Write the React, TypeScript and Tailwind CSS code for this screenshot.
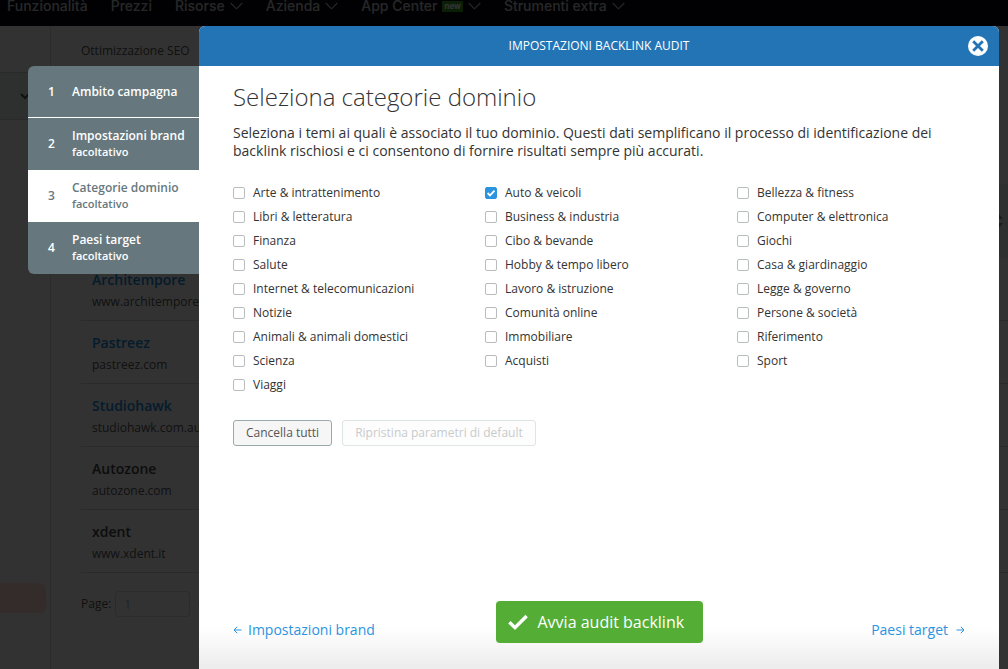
import { useState } from 'react';
import clsx from 'clsx';

const menuItems = [
  { label: 'Funzionalità' },
  { label: 'Prezzi' },
  { label: 'Risorse', hasMenu: true },
  { label: 'Azienda', hasMenu: true },
  { label: 'App Center', hasMenu: true, isNew: true },
  { label: 'Strumenti extra', hasMenu: true },
];

const projects = [
  { name: 'Architempore', domain: 'www.architempore.com', linked: true },
  { name: 'Pastreez', domain: 'pastreez.com', linked: true },
  { name: 'Studiohawk', domain: 'studiohawk.com.au', linked: true },
  { name: 'Autozone', domain: 'autozone.com', linked: false },
  { name: 'xdent', domain: 'www.xdent.it', linked: false },
];

const steps = [
  { title: 'Ambito campagna', optional: false },
  { title: 'Impostazioni brand', optional: true },
  { title: 'Categorie dominio', optional: true },
  { title: 'Paesi target', optional: true },
];

const categoryColumns = [
  [
    'Arte & intrattenimento',
    'Libri & letteratura',
    'Finanza',
    'Salute',
    'Internet & telecomunicazioni',
    'Notizie',
    'Animali & animali domestici',
    'Scienza',
    'Viaggi',
  ],
  [
    'Auto & veicoli',
    'Business & industria',
    'Cibo & bevande',
    'Hobby & tempo libero',
    'Lavoro & istruzione',
    'Comunità online',
    'Immobiliare',
    'Acquisti',
  ],
  [
    'Bellezza & fitness',
    'Computer & elettronica',
    'Giochi',
    'Casa & giardinaggio',
    'Legge & governo',
    'Persone & società',
    'Riferimento',
    'Sport',
  ],
];

const Chevron = () => (
  <svg viewBox="0 0 13 8" className="h-2 w-[13px]" fill="none" stroke="currentColor" strokeWidth="1.1">
    <path d="M0.7 1 6.5 6.8 12.3 1" />
  </svg>
);

const TopBar = () => (
  <header className="flex h-[26px] items-center gap-[23px] bg-[#05080f] pb-[14px] pl-[7px] font-['Inter'] text-sm leading-3 font-medium text-[#c4c4c4]">
    {menuItems.map((item) => (
      <a key={item.label} href="#" className="flex items-center gap-[5px] whitespace-nowrap">
        {item.label}
        {item.isNew && (
          <span className="bg-[#3b9d22] px-[2px] text-[8px] leading-[11px] font-bold text-white">new</span>
        )}
        {item.hasMenu && <Chevron />}
      </a>
    ))}
  </header>
);

const ProjectsPage = () => (
  <div className="flex flex-1">
    <aside className="w-[51px] shrink-0 border-r border-[#d5d5d5]">
      <div className="mt-[46px] flex h-12 items-center border-y border-[#d0d0d0] bg-[#e4e9ec] pl-5 text-[#555]">
        <svg viewBox="0 0 10 7" className="h-[7px] w-[10px]" fill="none" stroke="currentColor" strokeWidth="2">
          <path d="M1 1 5 5 9 1" />
        </svg>
      </div>
      <div className="mt-[463px] mr-1 h-[30px] rounded-r-md bg-[#ffdcd7]" />
    </aside>
    <main className="flex-1 pl-[30px] text-[#555]">
      <p className="pt-4 text-xs leading-[18px]">Ottimizzazione SEO &nbsp; ›</p>
      <div className="mt-[124px] flex h-[74px] items-center justify-end bg-[#e4e9ec] pr-[5px] text-[#888]">
        <svg viewBox="0 0 8 14" className="h-[14px] w-2" fill="currentColor">
          <path d="M4 0 8 5H0zM4 14 0 9h8z" />
        </svg>
      </div>
      <ul>
        {projects.map((project) => (
          <li key={project.name} className="h-[63px] border-b border-[#cfcfcf] pt-[11px] pl-[11px]">
            <a
              href="#"
              className={clsx(
                'block text-sm leading-[22px] font-semibold',
                project.linked ? 'text-[#1689d8]' : 'text-[#444]',
              )}
            >
              {project.name}
            </a>
            <span className="block text-xs leading-[22px]">{project.domain}</span>
          </li>
        ))}
      </ul>
      <div className="mt-[18px] flex items-center text-xs">
        <label htmlFor="page" className="mr-1">
          Page:
        </label>
        <input
          id="page"
          defaultValue="1"
          className="h-[26px] w-[75px] rounded border border-[#d5d5d5] px-2 text-[#aaa]"
        />
        <span className="ml-2">of 1</span>
      </div>
    </main>
  </div>
);

const StepNav = ({ current }: { current: number }) => (
  <nav className="mt-10 w-[171px] shrink-0 self-start overflow-hidden rounded-l-md bg-[#66787e]">
    {steps.map((step, index) => (
      <a
        key={step.title}
        href="#"
        className={clsx(
          'flex h-[52px] items-center pl-5 text-xs leading-4 font-semibold',
          index === 0 && 'border-b border-white',
          index === current ? 'bg-white text-[#66787e]' : 'text-white',
        )}
      >
        <span className="w-6">{index + 1}</span>
        <span>
          {step.title}
          {step.optional && <span className="block text-[11px]">facoltativo</span>}
        </span>
      </a>
    ))}
  </nav>
);

interface CategoryOptionProps {
  label: string;
  checked: boolean;
  onToggle: () => void;
}

const CategoryOption = ({ label, checked, onToggle }: CategoryOptionProps) => (
  <label className="flex h-6 items-center gap-2 text-xs whitespace-nowrap">
    <span className="relative flex">
      <input
        type="checkbox"
        checked={checked}
        onChange={onToggle}
        className="size-3 appearance-none rounded-xs border border-[#b9bcbd] bg-white checked:border-[#2b94e1] checked:bg-[#2b94e1]"
      />
      {checked && (
        <svg
          viewBox="0 0 12 12"
          className="pointer-events-none absolute inset-0 size-3"
          fill="none"
          stroke="white"
          strokeWidth="1.8"
        >
          <path d="M2.6 6 5 8.4 9.5 3.7" />
        </svg>
      )}
    </span>
    {label}
  </label>
);

const Arrow = ({ className }: { className?: string }) => (
  <svg viewBox="0 0 9 8" className={clsx('h-2 w-[9px]', className)} fill="none" stroke="currentColor">
    <path d="M0.5 4H8M4.8 0.8 8 4 4.8 7.2" />
  </svg>
);

export default function App() {
  const [selected, setSelected] = useState<string[]>(['Auto & veicoli']);

  const toggle = (label: string) => {
    setSelected((prev) => (prev.includes(label) ? prev.filter((item) => item !== label) : [...prev, label]));
  };

  return (
    <div className="relative flex min-h-screen flex-col overflow-hidden bg-[#fafafa] font-['Open_Sans','Noto_Sans',sans-serif]">
      <TopBar />
      <ProjectsPage />

      <div className="absolute inset-0 flex bg-black/80 pt-[26px] pr-[9px] pl-7">
        <StepNav current={2} />
        <section
          role="dialog"
          aria-labelledby="dialog-title"
          className="flex min-w-0 flex-1 flex-col overflow-hidden rounded-t-md bg-white text-[#333]"
        >
          <div className="relative flex h-10 shrink-0 items-center justify-center bg-[#2374b5] text-white">
            <h1 id="dialog-title" className="text-xs font-medium">
              IMPOSTAZIONI BACKLINK AUDIT
            </h1>
            <button
              type="button"
              aria-label="Chiudi"
              className="absolute right-[11px] flex size-5 items-center justify-center rounded-full bg-white text-[#2374b5]"
            >
              <svg viewBox="0 0 12 12" className="size-3" fill="none" stroke="currentColor" strokeWidth="2.8">
                <path d="M1.2 1.2 10.8 10.8M10.8 1.2 1.2 10.8" />
              </svg>
            </button>
          </div>

          <div className="flex-1 px-[34px] pt-[15px]">
            <h2 className="text-2xl font-light">Seleziona categorie dominio</h2>
            <p className="mt-[11px] text-sm leading-[18px]">
              Seleziona i temi ai quali è associato il tuo dominio. Questi dati semplificano il processo di
              identificazione dei backlink rischiosi e ci consentono di fornire risultati sempre più accurati.
            </p>

            <div className="mt-[21px] grid grid-cols-3 gap-6">
              {categoryColumns.map((column) => (
                <div key={column[0]}>
                  {column.map((label) => (
                    <CategoryOption
                      key={label}
                      label={label}
                      checked={selected.includes(label)}
                      onToggle={() => toggle(label)}
                    />
                  ))}
                </div>
              ))}
            </div>

            <div className="mt-[23px] flex gap-[10px] text-xs">
              <button
                type="button"
                onClick={() => setSelected([])}
                className="h-[26px] rounded-[3px] border border-[#9aa9ae] bg-[#f6f6f6] px-3 text-[#555]"
              >
                Cancella tutti
              </button>
              <button
                type="button"
                disabled
                className="h-[26px] rounded-[3px] border border-[#dfe4e5] bg-[#fdfdfd] px-3 text-[#c8cbcc]"
              >
                Ripristina parametri di default
              </button>
            </div>
          </div>

          <footer className="grid grid-cols-[1fr_auto_1fr] bg-linear-to-t from-[#ececec] to-white to-60% px-[34px] pb-[26px] text-sm font-medium text-[#2b94e1]">
            <a href="#" className="flex items-center gap-[6px] pt-4">
              <Arrow className="rotate-180" />
              Impostazioni brand
            </a>
            <button
              type="button"
              className="flex h-[42px] w-[207px] items-center gap-[10px] rounded bg-[#54ae35] pl-3 text-base text-white"
            >
              <svg viewBox="0 0 20 16" className="h-4 w-5" fill="none" stroke="currentColor" strokeWidth="3.4">
                <path d="M1.4 8.2 7 13.6 18.6 2" />
              </svg>
              Avvia audit backlink
            </button>
            <a href="#" className="flex items-center justify-end gap-2 pt-4">
              Paesi target
              <Arrow />
            </a>
          </footer>
        </section>
      </div>
    </div>
  );
}
